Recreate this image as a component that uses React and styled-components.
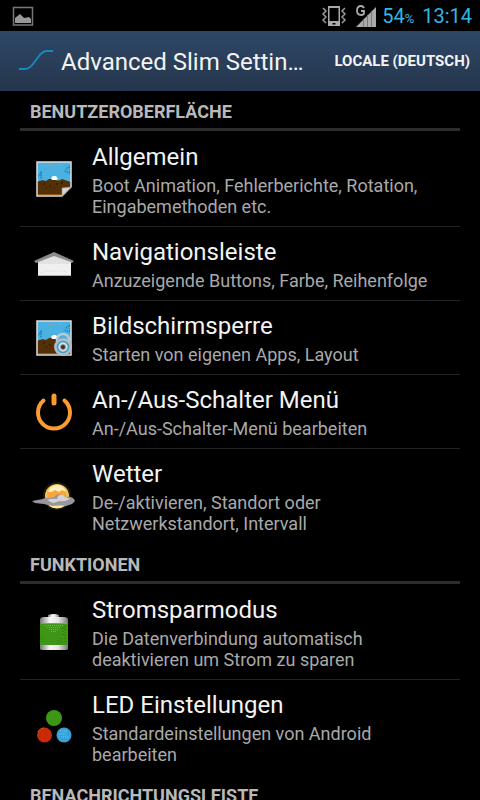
import styled, { createGlobalStyle } from "styled-components";

const GlobalStyle = createGlobalStyle`
* {
box-sizing: border-box;
}
body {
margin: 0;
background: #000;
color: #f3f3f3;
font-family: Roboto, "Liberation Sans", sans-serif;
}
h1, h2, h3, p, ul {
margin: 0;
padding: 0;
}
`;

const Screen = styled.div`
display: flex;
flex-direction: column;
height: 100vh;
overflow: hidden;
`;

const StatusBar = styled.div`
display: flex;
flex-shrink: 0;
align-items: center;
justify-content: space-between;
height: 31px;
padding: 0 8px 0 12px;
`;

const StatusGroup = styled.div`
display: flex;
align-items: center;
`;

const VibrateIcon = styled.svg`
margin-right: 9px;
`;

const SignalIcon = styled.svg`
margin-right: 6px;
`;

const Battery = styled.span`
margin-right: 8px;
font-size: 20px;
line-height: 24px;
color: #33b5e5;
`;

const Percent = styled.small`
font-size: 13px;
line-height: 12px;
`;

const Clock = styled.time`
font-size: 20px;
line-height: 24px;
color: #33b5e5;
`;

const ActionBar = styled.header`
display: flex;
flex-shrink: 0;
align-items: center;
height: 60px;
padding: 0 10px 0 16px;
background: linear-gradient(180deg, #2f4767 0%, #24364c 100%);
`;

const Title = styled.h1`
flex: 1;
min-width: 0;
margin: 2px 16px 0 5px;
font-weight: 400;
font-size: 24px;
line-height: 30px;
white-space: nowrap;
overflow: hidden;
text-overflow: ellipsis;
`;

const LocaleButton = styled.button`
padding: 0;
border: 0;
background: none;
color: #f3f3f3;
font-family: inherit;
font-weight: 700;
font-size: 15px;
line-height: 20px;
cursor: pointer;
`;

const Content = styled.main`
flex: 1;
min-height: 0;
padding: 0 20px;
overflow: hidden;
`;

const SectionTitle = styled.h2`
padding: 11px 10px 6px;
border-bottom: 3px solid #2d2d2d;
margin-bottom: 1px;
font-weight: 700;
font-size: 18px;
line-height: 20px;
color: #b9b9b9;
`;

const List = styled.ul`
padding-bottom: 1px;
list-style: none;
`;

const Item = styled.li`
display: flex;
align-items: center;
padding: 11px 0 9px;
cursor: pointer;

& + & {
border-top: 1px solid #242424;
}
`;

const ItemIcon = styled.svg`
flex-shrink: 0;
width: 48px;
height: 48px;
margin: 0 14px 0 10px;
`;

const ItemTitle = styled.h3`
margin-bottom: 3px;
font-weight: 400;
font-size: 24px;
line-height: 29px;
`;

const ItemSummary = styled.p`
max-width: 340px;
font-size: 18px;
line-height: 21px;
color: #a9a9a9;
`;

const Landscape = () => (
    <>
        <path d="M7 7H41V32L32 41H7Z" fill="#4bb0e2" />
        <path d="M7 27Q12 24 16 26Q19 23 24 24Q28 27 32 24Q37 26 41 27V32L32 41H7Z" fill="#533006" />
        <path d="M13 11h2M18 10h3M24 11h2M29 10h4" stroke="#b9a28c" strokeDasharray="1 1" />
        <path d="M36 14l4-3v7l-6-2M8 21l3-3v6" stroke="#1d84b5" strokeWidth="2" fill="none" strokeDasharray="1 1" />
        <path d="M21 23l2-2h3l2 3-2 1h-4z" fill="#fff" />
        <path d="M13 29h2M19 31h2M26 29h2M31 28h2M16 33h1M24 33h1" stroke="#241502" />
        <path d="M8 39.500H32" stroke="#8b530b" />
    </>
);

const AllgemeinIcon = () => (
    <ItemIcon viewBox="0 1 48 48" aria-hidden="true">
        <Landscape />
        <path d="M7 7H41V32L32 41H7Z" fill="none" stroke="#dedede" strokeWidth="1.500" />
        <path d="M32 41V33L41 32Z" fill="#d5d5d5" stroke="#999" strokeWidth=".6" />
    </ItemIcon>
);

const HomeIcon = () => (
    <ItemIcon viewBox="0 1 48 48" aria-hidden="true">
        <path d="M8 22H41V36H8Z" fill="#efefef" />
        <path d="M8 35.500H41" stroke="#a9b0ba" />
        <path d="M24 12L44 21L42 23L24 17L6 23L4 21Z" fill="#8b8b8b" />
        <path d="M24 16L41 22V24H8V22Z" fill="#e2e2e2" />
        <path d="M11 33l3-2h20l3 2" stroke="#c9c9c9" strokeDasharray="1 2" fill="none" />
    </ItemIcon>
);

const LockIcon = () => (
    <ItemIcon viewBox="0 1 48 48" aria-hidden="true">
        <Landscape />
        <path d="M32 41L41 32V41Z" fill="#533006" />
        <path d="M7 7H41V41H7Z" fill="none" stroke="#dedede" strokeWidth="1.500" />
        <path d="M27 28V25Q28 20 33 20Q38 20 39 25V28" fill="none" stroke="#b7cbd6" strokeWidth="2.500" />
        <circle cx="33" cy="33" r="8" fill="#8ecbec" stroke="#bababa" strokeWidth="2" />
        <circle cx="33" cy="33" r="5.500" fill="#ddd" stroke="#3c9ccb" strokeWidth="1.500" />
        <circle cx="33" cy="33" r="2.500" fill="#333" stroke="#999" />
    </ItemIcon>
);

const PowerIcon = () => (
    <ItemIcon viewBox="0 1 48 48" aria-hidden="true">
        <path d="M13.500 12.500A16 16 0 1 0 34.500 12.500" fill="none" stroke="#fb9b31" strokeWidth="4" strokeLinecap="round" />
        <path d="M24 8V15" stroke="#fb9b31" strokeWidth="5" strokeLinecap="round" />
    </ItemIcon>
);

const WeatherIcon = () => (
    <ItemIcon viewBox="0 1 48 48" aria-hidden="true">
        <circle cx="27" cy="24" r="14" fill="#211a0c" />
        <circle cx="27" cy="24" r="12" fill="#ebc54f" />
        <circle cx="27" cy="23" r="9.500" fill="#f9a53a" />
        <path d="M18 20Q20 13 27 13Q34 13 36 20L32 18L29 20L25 18L22 20Z" fill="#fff0bd" />
        <path d="M19 33Q27 38 35 33" fill="none" stroke="#fff0a0" strokeWidth="2" />
        <path d="M2 29L13 27Q16 25 20 26L24 25Q27 21 32 23L36 25Q43 24 45 29L42 32L36 34L29 33L22 34L14 32L5 31Z" fill="#98989c" />
        <path d="M17 28Q22 26 27 27L28 24Q33 21 35 25L40 27Q34 30 30 29L23 31Z" fill="#d3d3d7" />
    </ItemIcon>
);

const BatteryIcon = () => (
    <ItemIcon viewBox="0 0 48 48" aria-hidden="true">
        <defs>
            <linearGradient id="metal">
                <stop offset="0" stopColor="#777" />
                <stop offset=".35" stopColor="#f5f5f5" />
                <stop offset=".65" stopColor="#e5e5e5" />
                <stop offset="1" stopColor="#777" />
            </linearGradient>
        </defs>
        <path d="M18 10V6Q24 4 29 6V10Z" fill="url(#metal)" />
        <path d="M10 11Q10 8 14 8H34Q38 8 38 11V40Q38 41 35 41H13Q10 41 10 40Z" fill="url(#metal)" />
        <path d="M10 14H38V36H10Z" fill="#3f9616" />
        <path d="M11 14.500H37" stroke="#9b9e38" />
        <path d="M14 16.500H34M17 18.500H30M19 20.500H28M21 22.500H26" stroke="#99a934" strokeDasharray="1 1" />
        <path d="M33 19v8M35 17v18M31 29v6M28 31v4M12 29v6" stroke="#276f0a" strokeDasharray="1 2" />
    </ItemIcon>
);

const LedIcon = () => (
    <ItemIcon viewBox="0 1 48 48" aria-hidden="true">
        <circle cx="24" cy="15" r="8" fill="#3c9717" />
        <circle cx="14.500" cy="32" r="7.500" fill="#c92c04" />
        <circle cx="34" cy="32" r="7.500" fill="#36a3d8" />
        <path d="M8 29Q10 25 14 25" fill="none" stroke="#e98e47" strokeDasharray="1 1" />
        <path d="M30 28h8M29 31h7M31 34h7" stroke="#76c8ee" strokeDasharray="1 1" />
    </ItemIcon>
);

const sections = [
    {
        title: "BENUTZEROBERFLÄCHE",
        items: [
            { icon: AllgemeinIcon, title: "Allgemein", summary: "Boot Animation, Fehlerberichte, Rotation, Eingabemethoden etc." },
            { icon: HomeIcon, title: "Navigationsleiste", summary: "Anzuzeigende Buttons, Farbe, Reihenfolge" },
            { icon: LockIcon, title: "Bildschirmsperre", summary: "Starten von eigenen Apps, Layout" },
            { icon: PowerIcon, title: "An-/Aus-Schalter Menü", summary: "An-/Aus-Schalter-Menü bearbeiten" },
            { icon: WeatherIcon, title: "Wetter", summary: "De-/aktivieren, Standort oder Netzwerkstandort, Intervall" },
        ],
    },
    {
        title: "FUNKTIONEN",
        items: [
            { icon: BatteryIcon, title: "Stromsparmodus", summary: "Die Datenverbindung automatisch deaktivieren um Strom zu sparen" },
            { icon: LedIcon, title: "LED Einstellungen", summary: "Standardeinstellungen von Android bearbeiten" },
        ],
    },
    { title: "BENACHRICHTUNGSLEISTE", items: [] },
];

const App = () => {
    return (
        <Screen>
            <GlobalStyle />
            <StatusBar>
                <svg width="22" height="20" viewBox="0 0 22 20" aria-hidden="true">
                    <path d="M1.500 1.500H20.500V19H1.500Z" fill="none" stroke="#777" strokeWidth="1.500" />
                    <path d="M3 17V12L8 8L12 12L17 11L19 13V17Z" fill="#999" />
                </svg>
                <StatusGroup>
                    <VibrateIcon width="26" height="22" viewBox="0 0 26 22" aria-hidden="true">
                        <path d="M7 1H19V21H7Z" fill="#aaa" />
                        <path d="M8.500 3H17.500V16H8.500Z" fill="#000" />
                        <path d="M11.500 18H14.500V19.500H11.500Z" fill="#000" />
                        <path d="M2 3L5 6L2 9L5 12L2 15L5 18M24 3L21 6L24 9L21 12L24 15L21 18" fill="none" stroke="#999" strokeWidth="1.500" />
                    </VibrateIcon>
                    <SignalIcon width="20" height="22" viewBox="0 0 20 22" aria-hidden="true">
                        <path d="M0 22L20 2V22Z" fill="#aaa" />
                        <path d="M7.500 14V22M11.500 10V22M15.500 6V22" stroke="#777" />
                        <path d="M8 3Q7 1 5 1Q1 1 1 5.500Q1 10 5 10Q8 10 8 8V6H5" fill="none" stroke="#aaa" strokeWidth="1.800" />
                    </SignalIcon>
                    <Battery>54<Percent>%</Percent></Battery>
                    <Clock>13:14</Clock>
                </StatusGroup>
            </StatusBar>
            <ActionBar>
                <svg width="40" height="40" viewBox="0 0 40 40" aria-hidden="true">
                    <path d="M3 28H9Q13 28 17 23L23 15Q27 10 31 10H37" fill="none" stroke="#1689bd" strokeWidth="2" />
                </svg>
                <Title>Advanced Slim Settin…</Title>
                <LocaleButton type="button">LOCALE (DEUTSCH)</LocaleButton>
            </ActionBar>
            <Content>
                {sections.map((section) => (
                    <section key={section.title}>
                        <SectionTitle>{section.title}</SectionTitle>
                        <List>
                            {section.items.map(({ icon: Icon, title, summary }) => (
                                <Item key={title}>
                                    <Icon />
                                    <div>
                                        <ItemTitle>{title}</ItemTitle>
                                        <ItemSummary>{summary}</ItemSummary>
                                    </div>
                                </Item>
                            ))}
                        </List>
                    </section>
                ))}
            </Content>
        </Screen>
    )
}

export default App
